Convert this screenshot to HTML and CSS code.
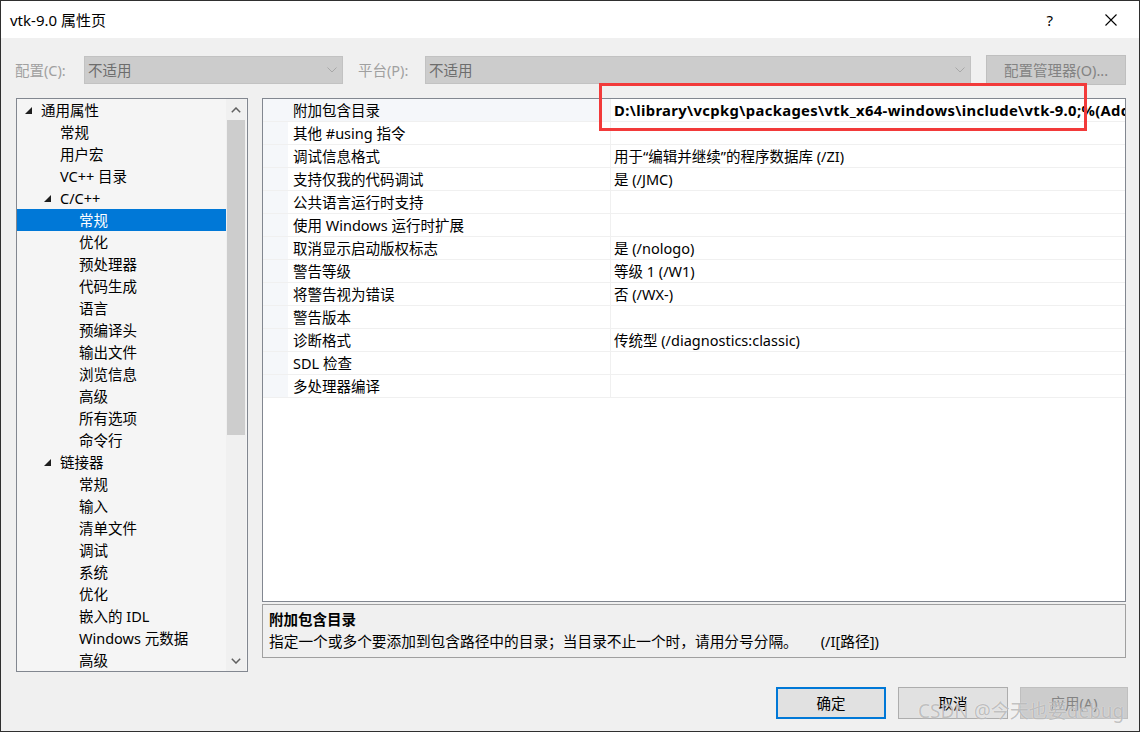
FILE: index.html
```html
<!DOCTYPE html>
<html lang="zh-CN">
<head>
<meta charset="utf-8">
<title>vtk-9.0 属性页</title>
<link rel="stylesheet" href="styles.css">
</head>
<body>
<div class="window">
  <div class="titlebar">
    <span class="title">vtk-9.0 属性页</span>
    <span class="help">?</span>
    <svg class="close" width="12" height="12" viewBox="0 0 12 12"><path d="M0.5 0.5 L11.5 11.5 M11.5 0.5 L0.5 11.5" stroke="#000" stroke-width="1.1" fill="none"/></svg>
  </div>
  <div class="body">
    <div class="config-row">
      <span class="lbl lbl-config">配置(C):</span>
      <div class="combo combo-config"><span class="combo-text">不适用</span><svg class="chev" width="10" height="6" viewBox="0 0 10 6"><path d="M0.5 0.5 L5 5 L9.5 0.5" stroke="#a8a8a8" stroke-width="1" fill="none"/></svg></div>
      <span class="lbl lbl-platform">平台(P):</span>
      <div class="combo combo-platform"><span class="combo-text">不适用</span><svg class="chev" width="10" height="6" viewBox="0 0 10 6"><path d="M0.5 0.5 L5 5 L9.5 0.5" stroke="#a8a8a8" stroke-width="1" fill="none"/></svg></div>
      <div class="btn btn-disabled btn-mgr">配置管理器(O)...</div>
    </div>
    <div class="main">
      <div class="tree">
        <ul class="tree-list">
          <li class="node l0"><span class="tog"><svg width="7" height="7" viewBox="0 0 7 7"><polygon points="7,0 7,7 0,7" fill="#1e1e1e"/></svg></span>通用属性</li>
          <li class="node l1"><span class="tog"></span>常规</li>
          <li class="node l1"><span class="tog"></span>用户宏</li>
          <li class="node l1"><span class="tog"></span>VC++ 目录</li>
          <li class="node l1"><span class="tog"><svg width="7" height="7" viewBox="0 0 7 7"><polygon points="7,0 7,7 0,7" fill="#1e1e1e"/></svg></span>C/C++</li>
          <li class="node l2 selected"><span class="tog"></span>常规</li>
          <li class="node l2"><span class="tog"></span>优化</li>
          <li class="node l2"><span class="tog"></span>预处理器</li>
          <li class="node l2"><span class="tog"></span>代码生成</li>
          <li class="node l2"><span class="tog"></span>语言</li>
          <li class="node l2"><span class="tog"></span>预编译头</li>
          <li class="node l2"><span class="tog"></span>输出文件</li>
          <li class="node l2"><span class="tog"></span>浏览信息</li>
          <li class="node l2"><span class="tog"></span>高级</li>
          <li class="node l2"><span class="tog"></span>所有选项</li>
          <li class="node l2"><span class="tog"></span>命令行</li>
          <li class="node l1"><span class="tog"><svg width="7" height="7" viewBox="0 0 7 7"><polygon points="7,0 7,7 0,7" fill="#1e1e1e"/></svg></span>链接器</li>
          <li class="node l2"><span class="tog"></span>常规</li>
          <li class="node l2"><span class="tog"></span>输入</li>
          <li class="node l2"><span class="tog"></span>清单文件</li>
          <li class="node l2"><span class="tog"></span>调试</li>
          <li class="node l2"><span class="tog"></span>系统</li>
          <li class="node l2"><span class="tog"></span>优化</li>
          <li class="node l2"><span class="tog"></span>嵌入的 IDL</li>
          <li class="node l2"><span class="tog"></span>Windows 元数据</li>
          <li class="node l2"><span class="tog"></span>高级</li>
        </ul>
        <div class="vscroll">
          <div class="arrow"><svg width="10" height="6" viewBox="0 0 10 6"><path d="M0.8 5.2 L5 1 L9.2 5.2" stroke="#606060" stroke-width="1.5" fill="none"/></svg></div>
          <div class="track"><div class="thumb"></div></div>
          <div class="arrow"><svg width="10" height="6" viewBox="0 0 10 6"><path d="M0.8 0.8 L5 5 L9.2 0.8" stroke="#606060" stroke-width="1.5" fill="none"/></svg></div>
        </div>
      </div>
      <div class="right">
        <div class="grid">
          <div class="prow current"><span class="gut"></span><span class="pname">附加包含目录</span><span class="pval bold">D:\library\vcpkg\packages\vtk_x64-windows\include\vtk-9.0;%(Add</span></div>
          <div class="prow"><span class="gut"></span><span class="pname">其他 #using 指令</span><span class="pval"></span></div>
          <div class="prow"><span class="gut"></span><span class="pname">调试信息格式</span><span class="pval">用于“编辑并继续”的程序数据库 (/ZI)</span></div>
          <div class="prow"><span class="gut"></span><span class="pname">支持仅我的代码调试</span><span class="pval">是 (/JMC)</span></div>
          <div class="prow"><span class="gut"></span><span class="pname">公共语言运行时支持</span><span class="pval"></span></div>
          <div class="prow"><span class="gut"></span><span class="pname">使用 Windows 运行时扩展</span><span class="pval"></span></div>
          <div class="prow"><span class="gut"></span><span class="pname">取消显示启动版权标志</span><span class="pval">是 (/nologo)</span></div>
          <div class="prow"><span class="gut"></span><span class="pname">警告等级</span><span class="pval">等级 1 (/W1)</span></div>
          <div class="prow"><span class="gut"></span><span class="pname">将警告视为错误</span><span class="pval">否 (/WX-)</span></div>
          <div class="prow"><span class="gut"></span><span class="pname">警告版本</span><span class="pval"></span></div>
          <div class="prow"><span class="gut"></span><span class="pname">诊断格式</span><span class="pval">传统型 (/diagnostics:classic)</span></div>
          <div class="prow"><span class="gut"></span><span class="pname">SDL 检查</span><span class="pval"></span></div>
          <div class="prow"><span class="gut"></span><span class="pname">多处理器编译</span><span class="pval"></span></div>
        </div>
        <div class="desc">
          <div class="desc-title">附加包含目录</div>
          <div class="desc-text">指定一个或多个要添加到包含路径中的目录；当目录不止一个时，请用分号分隔。&nbsp;&nbsp;&nbsp;&nbsp;&nbsp;&nbsp;(/I[路径])</div>
        </div>
      </div>
    </div>
    <div class="buttons">
      <div class="btn btn-default">确定</div>
      <div class="btn">取消</div>
      <div class="btn btn-disabled btn-apply">应用(A)</div>
    </div>
  </div>
  <div class="redbox"></div>
  <div class="watermark">CSDN @今天也要debug</div>
</div>
</body>
</html>
```

FILE: styles.css
```css
* { box-sizing: border-box; }
html, body { margin: 0; padding: 0; }
body {
  width: 1140px;
  height: 732px;
  overflow: hidden;
  font-family: "Noto Sans", "Noto Sans CJK SC", sans-serif;
  font-size: 14.5px;
  color: #000;
}
.window {
  position: relative;
  width: 1140px;
  height: 732px;
  border: 1px solid #2f2f2f;
  display: flex;
  flex-direction: column;
  background: #f0f0f0;
  overflow: hidden;
}
.titlebar {
  height: 37px;
  background: #fff;
  display: flex;
  align-items: center;
  padding-left: 9px;
  flex-shrink: 0;
}
.title { font-size: 15px; line-height: 20px; }
.help { margin-left: auto; font-size: 15px; line-height: 20px; margin-right: 52px; }
.close { margin-right: 22px; }

.body {
  flex: 1;
  display: flex;
  flex-direction: column;
  padding: 0 13px 0 15px;
  min-width: 0;
}
.config-row {
  margin-top: 17px;
  height: 30px;
  display: flex;
  align-items: center;
}
.lbl { color: #a0a0a0; line-height: 20px; }
.lbl-config { width: 69px; margin-left: -1px; }
.lbl-platform { width: 67px; margin-left: 15px; }
.combo {
  height: 28px;
  background: #cccccc;
  border: 1px solid #c2c2c2;
  display: flex;
  align-items: center;
  padding: 0 5px 0 3px;
  color: #6d6d6d;
}
.combo-text { line-height: 20px; }
.chev { margin-left: auto; }
.combo-config { width: 259px; }
.combo-platform { width: 546px; }
.btn {
  height: 32px;
  width: 110px;
  border: 1px solid #adadad;
  background: #e1e1e1;
  display: flex;
  align-items: center;
  justify-content: center;
  line-height: 20px;
}
.btn-disabled { background: #cccccc; border-color: #bfbfbf; color: #838383; }
.btn-mgr { width: 140px; height: 30px; margin-left: 15px; }

.main {
  margin-top: 13px;
  display: flex;
  gap: 14px;
  height: 574px;
  min-width: 0;
}
.tree {
  width: 232px;
  height: 574px;
  border: 1px solid #828790;
  background: #f5f5f5;
  display: flex;
  flex-shrink: 0;
}
.tree-list {
  list-style: none;
  margin: 0;
  padding: 0;
  width: 209px;
  overflow: hidden;
}
.node {
  height: 22px;
  line-height: 22px;
  display: flex;
  align-items: center;
  white-space: nowrap;
}
.node.l0 { padding-left: 7px; }
.node.l1 { padding-left: 26px; }
.node.l2 { padding-left: 45px; }
.tog { width: 17px; height: 22px; display: flex; align-items: center; padding-left: 1px; flex-shrink: 0; }
.node.selected { background: #0078d7; color: #fff; }
.vscroll {
  width: 20px;
  display: flex;
  flex-direction: column;
  background: #f0f0f0;
}
.arrow { height: 21px; display: flex; align-items: center; justify-content: center; }
.track { flex: 1; padding: 0 1px; }
.thumb { height: 315px; background: #cdcdcd; }

.right {
  flex: 1;
  min-width: 0;
  display: flex;
  flex-direction: column;
  gap: 2px;
}
.grid {
  height: 504px;
  border: 1px solid #828790;
  background: #fff;
  overflow: hidden;
}
.prow {
  height: 23px;
  display: flex;
  border-bottom: 1px solid #f0f0f0;
  line-height: 22px;
  white-space: nowrap;
}
.gut { width: 25px; background: #f5f7fa; flex-shrink: 0; }
.pname { width: 322px; padding-left: 5px; flex-shrink: 0; overflow: hidden; }
.prow.current .pname { background: #f5f7fa; }
.pval { flex: 1; min-width: 0; border-left: 1px solid #f0f0f0; padding-left: 3px; overflow: hidden; }
.pval.bold { font-weight: bold; letter-spacing: 0.35px; font-size: 14.8px; }

.desc {
  height: 54px;
  border: 1px solid #a0a0a0;
  background: #f0f0f0;
  padding: 4px 6px;
  overflow: hidden;
}
.desc-title { font-weight: bold; line-height: 20px; font-size: 14.5px; }
.desc-text { line-height: 20px; margin-top: 2px; font-size: 14.7px; white-space: nowrap; }

.buttons {
  margin-top: 15px;
  display: flex;
  justify-content: flex-end;
  gap: 12px;
  margin-right: -2px;
}
.btn-default { border: 2px solid #0078d7; }
.btn-apply { width: 108px; }

.redbox {
  position: absolute;
  left: 598px;
  top: 82px;
  width: 488px;
  height: 48px;
  border: 3px solid #f23a3a;
  pointer-events: none;
}
.watermark {
  position: absolute;
  left: 917px;
  top: 697px;
  font-size: 19px;
  line-height: 26px;
  color: rgba(120, 120, 120, 0.45);
  text-shadow: 0 0 1px rgba(255,255,255,0.9);
  white-space: nowrap;
  pointer-events: none;
}
```
